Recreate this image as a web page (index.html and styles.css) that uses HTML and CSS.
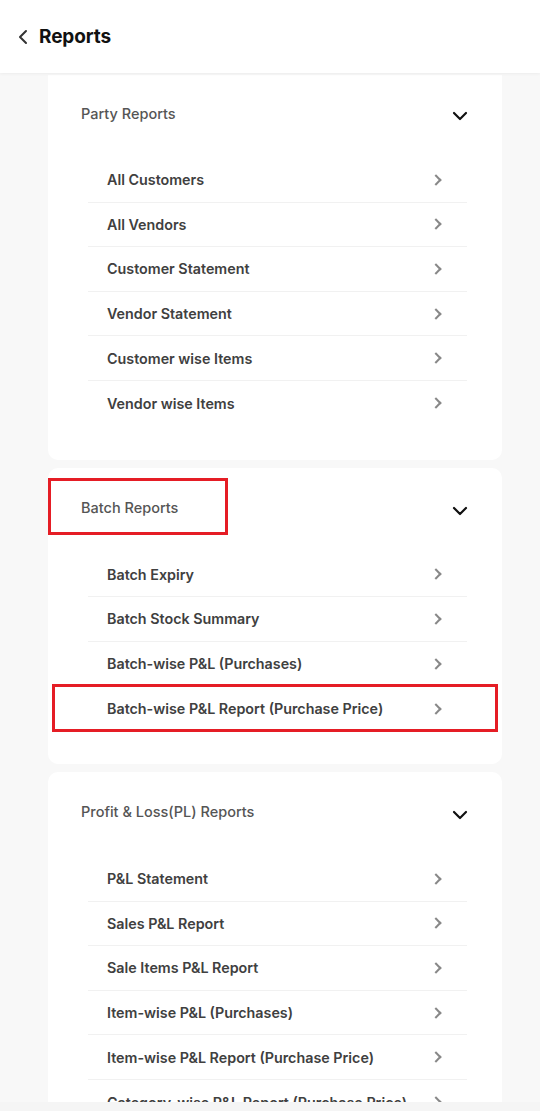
FILE: index.html
```html
<!DOCTYPE html>
<html lang="en">
<head>
    <meta charset="UTF-8">
    <meta name="viewport" content="width=device-width, initial-scale=1.0">
    <title>Reports</title>
    <link rel="stylesheet" href="styles.css">
</head>
<body>
    <header class="topbar">
        <svg class="back" width="12" height="16" viewBox="0 0 12 16"><path d="M9 2L3 8l6 6" fill="none" stroke="#333" stroke-width="2" stroke-linecap="round" stroke-linejoin="round"/></svg>
        <h1>Reports</h1>
    </header>

    <main class="content">
        <section class="card first">
            <div class="card-head">
                <h2>Party Reports</h2>
                <svg class="down" width="16" height="10" viewBox="0 0 16 10"><path d="M2 2l6 6 6-6" fill="none" stroke="#111" stroke-width="2.2" stroke-linecap="round" stroke-linejoin="round"/></svg>
            </div>
            <ul class="list">
                <li><span>All Customers</span><i class="go"></i></li>
                <li><span>All Vendors</span><i class="go"></i></li>
                <li><span>Customer Statement</span><i class="go"></i></li>
                <li><span>Vendor Statement</span><i class="go"></i></li>
                <li><span>Customer wise Items</span><i class="go"></i></li>
                <li><span>Vendor wise Items</span><i class="go"></i></li>
            </ul>
        </section>

        <section class="card">
            <div class="card-head">
                <h2>Batch Reports</h2>
                <svg class="down" width="16" height="10" viewBox="0 0 16 10"><path d="M2 2l6 6 6-6" fill="none" stroke="#111" stroke-width="2.2" stroke-linecap="round" stroke-linejoin="round"/></svg>
            </div>
            <ul class="list">
                <li><span>Batch Expiry</span><i class="go"></i></li>
                <li><span>Batch Stock Summary</span><i class="go"></i></li>
                <li><span>Batch-wise P&amp;L (Purchases)</span><i class="go"></i></li>
                <li><span>Batch-wise P&amp;L Report (Purchase Price)</span><i class="go"></i></li>
            </ul>
            <div class="mark mark-title"></div>
            <div class="mark mark-row"></div>
        </section>

        <section class="card">
            <div class="card-head">
                <h2>Profit &amp; Loss(PL) Reports</h2>
                <svg class="down" width="16" height="10" viewBox="0 0 16 10"><path d="M2 2l6 6 6-6" fill="none" stroke="#111" stroke-width="2.2" stroke-linecap="round" stroke-linejoin="round"/></svg>
            </div>
            <ul class="list">
                <li><span>P&amp;L Statement</span><i class="go"></i></li>
                <li><span>Sales P&amp;L Report</span><i class="go"></i></li>
                <li><span>Sale Items P&amp;L Report</span><i class="go"></i></li>
                <li><span>Item-wise P&amp;L (Purchases)</span><i class="go"></i></li>
                <li><span>Item-wise P&amp;L Report (Purchase Price)</span><i class="go"></i></li>
                <li><span>Category-wise P&amp;L Report (Purchase Price)</span><i class="go"></i></li>
            </ul>
        </section>
    </main>

    <div class="bottom-strip"></div>
</body>
</html>
```

FILE: styles.css
```css
* {
    box-sizing: border-box;
}
html, body {
    margin: 0;
    padding: 0;
}
body {
    font-family: Inter, "Noto Sans", sans-serif;
    background-color: #f8f8f8;
    color: #333;
    height: 1111px;
    overflow: hidden;
}
.topbar {
    height: 73px;
    background-color: #fff;
    display: flex;
    align-items: center;
    padding-left: 17px;
    gap: 10px;
    box-shadow: 0 1px 3px rgba(0, 0, 0, 0.05);
    position: relative;
    z-index: 2;
}
.topbar h1 {
    margin: 0;
    font-size: 19px;
    font-weight: 700;
    color: #111;
    letter-spacing: -0.1px;
}
.back {
    margin-top: 1px;
}
.content {
    padding: 2px 38px 0 48px;
    display: flex;
    flex-direction: column;
    gap: 8px;
}
.card {
    background-color: #fff;
    border-radius: 10px;
    padding: 30px 0 33px;
    position: relative;
}
.card.first {
    border-radius: 0 0 10px 10px;
    padding-top: 28px;
    padding-bottom: 34px;
}
.card-head {
    display: flex;
    align-items: center;
    justify-content: space-between;
    padding: 0 34px 0 33px;
    height: 20px;
}
.card-head h2 {
    margin: 0;
    font-size: 14.5px;
    font-weight: 500;
    color: #555;
}
.down {
    margin-top: 6px;
}
.list {
    list-style: none;
    margin: 35px 35px 0 40px;
    padding: 0;
}
.list li {
    display: flex;
    align-items: center;
    justify-content: space-between;
    height: 44.6px;
    padding: 0 25px 0 19px;
    border-bottom: 1px solid #f1f1f1;
    font-size: 14.3px;
    font-weight: 600;
    color: #404040;
}
.list li:last-child {
    border-bottom: none;
}
.go {
    width: 8px;
    height: 8px;
    border-right: 2px solid #888;
    border-top: 2px solid #888;
    transform: rotate(45deg);
    margin-right: 2px;
}
.mark {
    position: absolute;
    border: 3px solid #e51d25;
    pointer-events: none;
}
.mark-title {
    left: 0;
    top: 10px;
    width: 180px;
    height: 57px;
}
.mark-row {
    left: 4px;
    top: 216px;
    width: 446px;
    height: 48px;
}
.bottom-strip {
    position: fixed;
    left: 0;
    right: 0;
    bottom: 0;
    height: 9px;
    background-color: #f5f5f5;
    z-index: 3;
}
```
